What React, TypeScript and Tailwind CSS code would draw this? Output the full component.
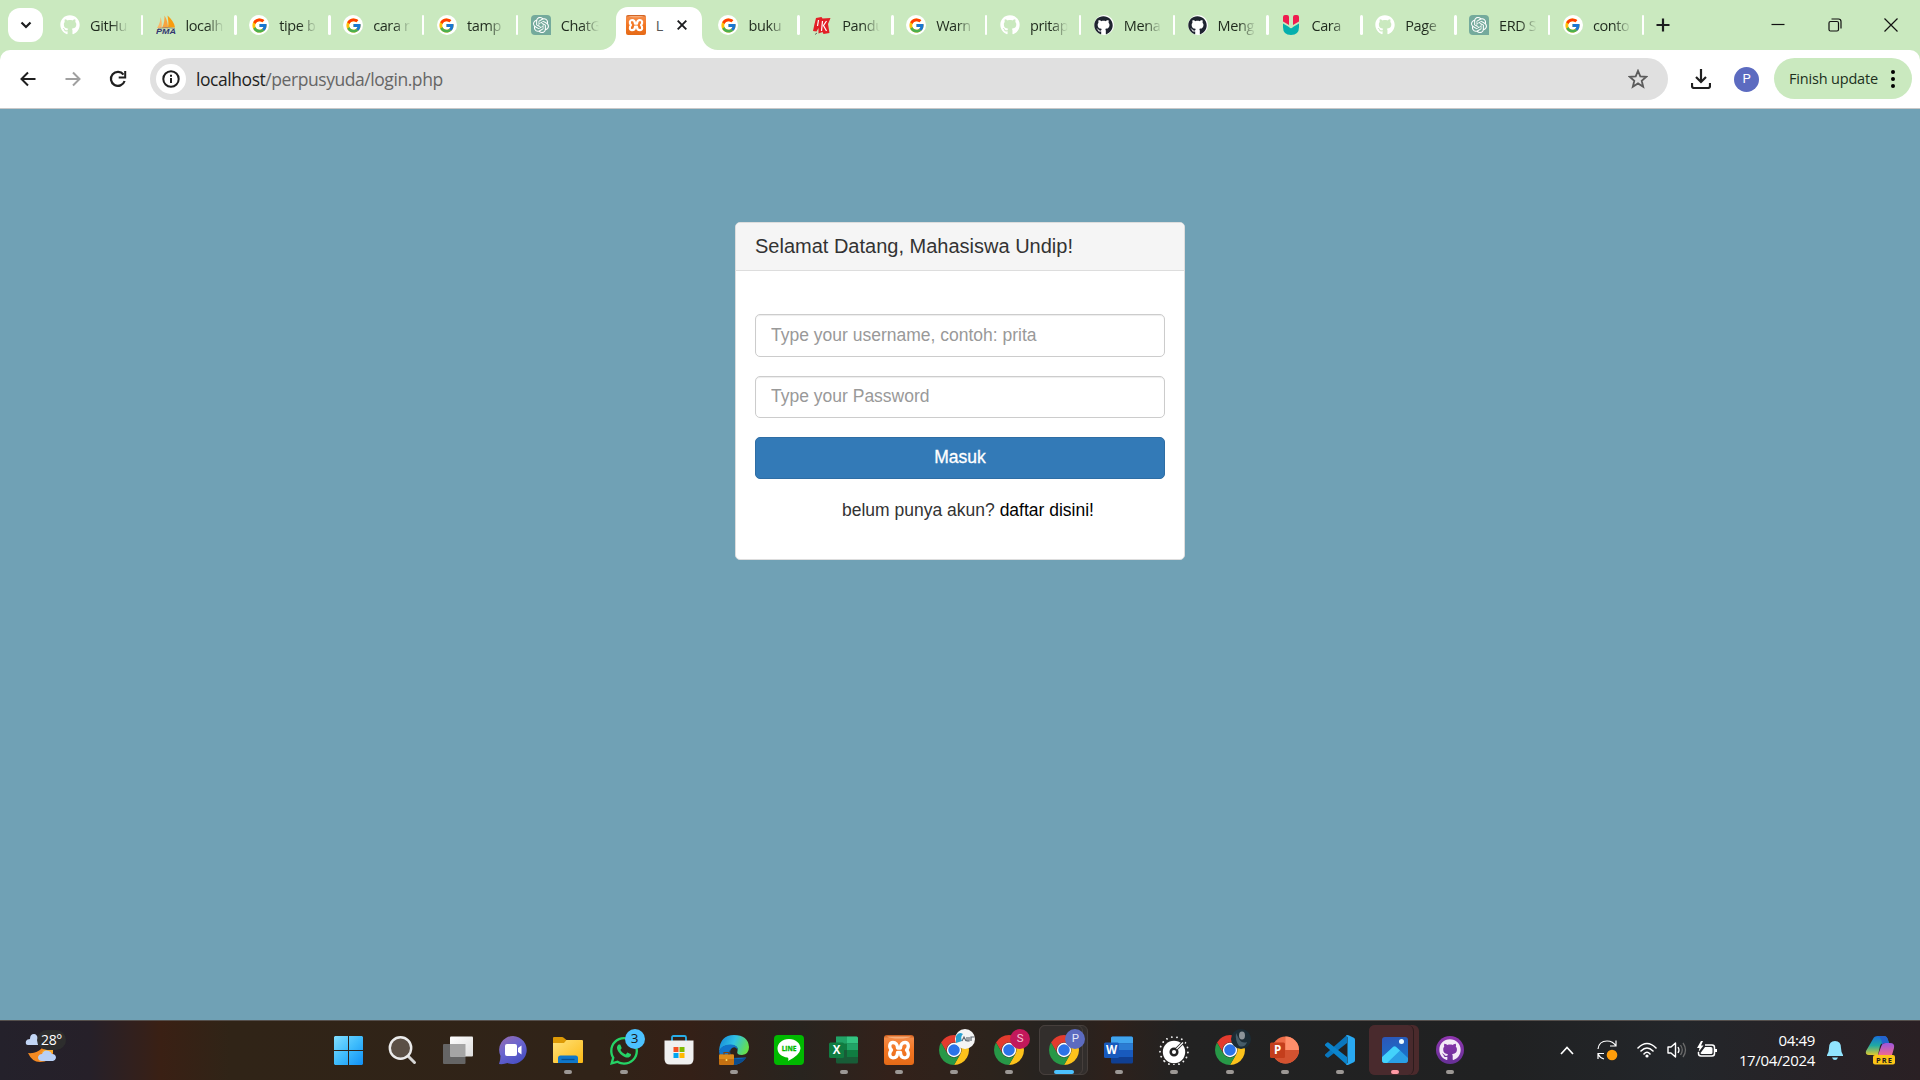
import React from "react";
import { FcGoogle } from "react-icons/fc";
import { FaGithub, FaWhatsapp } from "react-icons/fa";
import { SiOpenai } from "react-icons/si";

const ui = "font-['Open_Sans','Noto_Sans',sans-serif]";

const GoogleFav = () => (
  <span className="flex size-5 items-center justify-center rounded-full bg-white">
    <FcGoogle className="size-[17px]" />
  </span>
);

const OpenAiFav = () => (
  <span className="flex size-5 items-center justify-center rounded-[4px] rounded-br-none bg-[#74aa9c]">
    <SiOpenai className="size-4 text-white" />
  </span>
);

const GithubWhite = () => <FaGithub className="size-5 text-white" />;

const GithubDark = () => (
  <span className="flex size-5 items-center justify-center rounded-full bg-white">
    <FaGithub className="size-[19px] text-[#1f2430]" />
  </span>
);

const PmaFav = () => (
  <svg viewBox="0 0 20 20" className="size-5">
    <path d="M1 13C3.500 9 4.500 6 4.500 2C6 6 6 10 5.500 13Z" fill="#f9b868" />
    <path d="M6 13C8.500 8 8.500 4 8.500 .5C11 4 12 9 12 13.500Z" fill="#f6a340" />
    <path d="M12 12.500C13 8 12 4 11.500 .5C15.500 4 18.500 8 19 12.500Z" fill="#f89c0e" />
    <path d="M2 13.500Q10 11.500 19 13.500" stroke="#777" strokeWidth=".7" fill="none" />
    <text x="0" y="19" fontFamily="Liberation Sans" fontSize="7" fontWeight="bold" fontStyle="italic" fill="#33366f" textLength="20" lengthAdjust="spacingAndGlyphs">PMA</text>
  </svg>
);

const XamppMark = ({ className }: { className: string }) => (
  <svg viewBox="0 0 30 30" className={className}>
    <defs>
      <linearGradient id="xampp" x1="0" y1="0" x2="0" y2="1">
        <stop offset="0" stopColor="#c85c1e" />
        <stop offset=".12" stopColor="#f58a45" />
        <stop offset=".5" stopColor="#f37623" />
        <stop offset="1" stopColor="#e56a17" />
      </linearGradient>
    </defs>
    <rect width="30" height="30" rx="3" fill="url(#xampp)" />
    <path d="M3 1.500H27Q24 3.500 15 3.500Q6 3.500 3 1.500Z" fill="#ffc9a0" opacity=".65" />
    <path
      d="M13.500 13H16.500C16.500 9.500 18.500 7.500 21 7.500C24.500 7.500 25.500 12 22.500 15C25.500 18 24.500 22.800 21 22.800C18.500 22.800 16.500 21 16.500 17.500H13.500C13.500 21 11.500 22.800 9 22.800C5.500 22.800 4.500 18 7.500 15C4.500 12 5.500 7.500 9 7.500C11.500 7.500 13.500 9.500 13.500 13Z"
      fill="none"
      stroke="#fff"
      strokeWidth="3.300"
      strokeLinejoin="round"
    />
  </svg>
);

const PandFav = () => (
  <svg viewBox="0 0 20 20" className="size-5">
    <path d="M4 3L9.500 2L10.500 3.500L18.500 3L16 9L17.500 18L11.500 19L10.500 17L6.500 18.500L6.500 13L4.500 16.500L1 16L2.500 9Z" fill="#e21f26" />
    <path d="M6.500 5L5.500 11M10.500 6L9.500 16M14.500 6L11.500 10.500L14.500 16" stroke="#fff" strokeWidth="1.200" fill="none" />
    <path d="M3 19.500L5 18" stroke="#444" strokeWidth=".8" />
  </svg>
);

const UFav = () => (
  <svg viewBox="0 0 20 20" className="size-5">
    <path d="M2 2Q2 0 4 0H6Q8 0 8 2V10L2 6.500ZM12 2Q12 0 14 0H16Q18 0 18 2V6.500L12 10Z" fill="#f01c4f" />
    <path d="M2 8.500L8 12Q10 14.500 12 12L18 8.500V12Q18 20 10 20Q2 20 2 12Z" fill="#04afad" />
  </svg>
);

const tabs: { title: string; icon: React.ReactNode; active?: boolean; sep?: boolean }[] = [
  { title: "GitHub", icon: <GithubWhite />, sep: true },
  { title: "localh", icon: <PmaFav />, sep: true },
  { title: "tipe b", icon: <GoogleFav />, sep: true },
  { title: "cara r", icon: <GoogleFav />, sep: true },
  { title: "tamp", icon: <GoogleFav />, sep: true },
  { title: "ChatG", icon: <OpenAiFav /> },
  { title: "L", icon: <XamppMark className="size-5" />, active: true },
  { title: "buku", icon: <GoogleFav />, sep: true },
  { title: "Pandu", icon: <PandFav />, sep: true },
  { title: "Warn", icon: <GoogleFav />, sep: true },
  { title: "pritap", icon: <GithubWhite />, sep: true },
  { title: "Mena", icon: <GithubDark />, sep: true },
  { title: "Meng", icon: <GithubDark />, sep: true },
  { title: "Cara", icon: <UFav />, sep: true },
  { title: "Page", icon: <GithubWhite />, sep: true },
  { title: "ERD S", icon: <OpenAiFav />, sep: true },
  { title: "conto", icon: <GoogleFav />, sep: true },
];

function TabStrip() {
  return (
    <div className="flex h-[50px] items-center">
      <div className="ml-2 flex h-[34px] w-[35px] shrink-0 items-center justify-center rounded-[12px] bg-white">
        <svg viewBox="0 0 12 8" className="h-2 w-3"><path d="M1.500 1.500L6 6L10.500 1.500" fill="none" stroke="#1c1d1f" strokeWidth="2.200" /></svg>
      </div>
      <div className="ml-[4.500px] flex h-full">
        {tabs.map((t, i) =>
          t.active ? (
            <div key={i} className="relative flex w-[93.830px] shrink-0 items-end justify-center">
              <svg viewBox="0 0 118 43" className="absolute bottom-0 -left-3 h-[43px] w-[118px]">
                <path d="M0 43C9 43 16 36 16 28V12C16 5 21 0 28 0H90C97 0 102 5 102 12V28C102 36 109 43 118 43Z" fill="#fff" />
              </svg>
              <div className="relative flex h-[50px] w-full items-center pl-[13.500px]">
                {t.icon}
                <span className="mt-px ml-[10px] w-[8px] text-[14.500px] leading-5 text-[#555]">{t.title}</span>
                <svg viewBox="0 0 10 10" className="ml-[13px] size-[10px]"><path d="M.7 .7L9.300 9.300M9.300 .7L.7 9.300" stroke="#1c1d1f" strokeWidth="1.900" /></svg>
              </div>
            </div>
          ) : (
            <div key={i} className="flex w-[93.830px] shrink-0 items-center pl-[12.500px] first:w-[95.500px]">
              <span className="shrink-0">{t.icon}</span>
              <span className="mt-px ml-[10px] w-[38px] overflow-hidden text-[14.500px] leading-6 tracking-[-0.400px] whitespace-nowrap text-[#1f2a1d] [mask-image:linear-gradient(to_right,black_55%,transparent_100%)]">{t.title}</span>
              {t.sep && <span className="ml-auto h-5 w-[2.500px] rounded-full bg-white" />}
            </div>
          )
        )}
      </div>
      <svg viewBox="0 0 14 14" className="ml-[12px] size-[14px]"><path d="M7 .5V13.500M.5 7H13.500" stroke="#1c1d1f" strokeWidth="2.200" /></svg>
      <div className="mr-[22px] ml-auto flex items-center gap-[42.500px]">
        <svg viewBox="0 0 14 14" className="size-[14px]"><path d="M.5 6.500H13.500" stroke="#111" strokeWidth="1.200" /></svg>
        <svg viewBox="0 0 14 14" className="size-[14px]"><rect x="1" y="3.500" width="9.500" height="9.500" rx="1.500" fill="none" stroke="#111" strokeWidth="1.200" /><path d="M3.500 1H10.500Q13 1 13 3.500V10.500" fill="none" stroke="#111" strokeWidth="1.200" /></svg>
        <svg viewBox="0 0 14 14" className="size-[14px]"><path d="M.5 .5L13.500 13.500M13.500 .5L.5 13.500" stroke="#111" strokeWidth="1.200" /></svg>
      </div>
    </div>
  );
}

function Toolbar() {
  return (
    <div className="flex h-[59px] items-center rounded-t-[10px] border-b border-[#c8c8c8] bg-white pr-2">
      <svg viewBox="0 0 16 16" className="ml-5 size-4"><path d="M15.500 8H2M8 1.500L1.500 8L8 14.500" fill="none" stroke="#1f1f1f" strokeWidth="2" /></svg>
      <svg viewBox="0 0 16 16" className="ml-[28.500px] size-4"><path d="M.5 8H14M8 1.500L14.500 8L8 14.500" fill="none" stroke="#a0a0a0" strokeWidth="2" /></svg>
      <svg viewBox="0 0 18 18" className="ml-[28px] size-[18px]"><path d="M14.500 4.600A7 7 0 1 0 15.600 11" fill="none" stroke="#1f1f1f" strokeWidth="2.200" /><path d="M16.200 1V7.500H9.700" fill="none" stroke="#1f1f1f" strokeWidth="2" /></svg>
      <div className="ml-[23.500px] flex h-[42px] w-[1518px] items-center rounded-full bg-[#e0e0e0] pr-5 pl-[6px]">
        <span className="flex size-[30px] items-center justify-center rounded-full bg-white">
          <svg viewBox="0 0 18 18" className="size-[18px]"><circle cx="9" cy="9" r="7.700" fill="none" stroke="#1f1f1f" strokeWidth="2" /><path d="M9 8V13M9 4.800V6.800" stroke="#1f1f1f" strokeWidth="2" /></svg>
        </span>
        <span className="mt-px ml-[10px] text-[17.500px] tracking-[-0.440px] text-[#666]"><span className="text-[#1f1f1f]">localhost</span>/perpusyuda/login.php</span>
        <svg viewBox="0 0 20 20" className="ml-auto size-5"><path d="M10 1.800L12.300 7.400L18.300 7.800L13.700 11.700L15.200 17.700L10 14.400L4.800 17.700L6.300 11.700L1.700 7.800L7.700 7.400Z" fill="none" stroke="#5c5c5c" strokeWidth="1.800" /></svg>
      </div>
      <svg viewBox="0 0 20 20" className="ml-[23px] size-5"><path d="M10 0V12M5 8L10 13L15 8M1 14V17Q1 19 3 19H17Q19 19 19 17V14" fill="none" stroke="#1f1f1f" strokeWidth="2.200" /></svg>
      <span className="ml-[23px] flex size-[25px] items-center justify-center rounded-full bg-[#5c6bc0] font-[Roboto,sans-serif] text-[13px] text-white">P</span>
      <div className="mb-px ml-auto flex h-[41px] w-[138px] items-center rounded-full bg-[#cae9bf] pl-[15px]">
        <span className="text-[14.500px] tracking-[-0.180px] whitespace-nowrap text-[#20301c]">Finish update</span>
        <svg viewBox="0 0 4 18" className="mr-[17.500px] ml-auto h-[18px] w-1"><circle cx="2" cy="2" r="2" /><circle cx="2" cy="9" r="2" /><circle cx="2" cy="16" r="2" /></svg>
      </div>
    </div>
  );
}

function LoginCard() {
  return (
    <div className="mt-[113px] h-[338px] w-[450px] rounded-[5px] border border-[#ddd] bg-white font-['Liberation_Sans',Arial,sans-serif] text-[17.500px] text-[#333]">
      <div className="flex h-[48px] items-center rounded-t-[4px] border-b border-[#ddd] bg-[#f5f5f5] px-[19px] pb-[2px] text-[20px]">Selamat Datang, Mahasiswa Undip!</div>
      <div className="flex flex-col px-[19px] pt-[43px]">
        <input type="text" placeholder="Type your username, contoh: prita" className="h-[43px] rounded-[5px] border border-[#ccc] px-[15px] shadow-[inset_0_1px_1px_rgba(0,0,0,0.075)] placeholder:text-[#999]" />
        <input type="password" placeholder="Type your Password" className="mt-[19px] h-[42px] rounded-[5px] border border-[#ccc] px-[15px] pb-[2px] shadow-[inset_0_1px_1px_rgba(0,0,0,0.075)] placeholder:text-[#999]" />
        <button className="mt-[19px] h-[42px] rounded-[5px] border border-[#2e6da4] bg-[#337ab7] pb-[2px] text-white [-webkit-text-stroke:0.300px_white]">Masuk</button>
        <p className="mt-[19px] pl-[16px] text-center leading-[25px]">belum punya akun? <a className="text-black">daftar disini!</a></p>
      </div>
    </div>
  );
}

const Chrome = ({ badge }: { badge: React.ReactNode }) => (
  <span className="relative block size-[30px]">
    <svg viewBox="4 4 40 40" className="size-[30px]">
      <path d="M6.680 14A20 20 0 0 1 41.320 14L24 14A10 10 0 0 0 15.340 29Z" fill="#e33b2e" />
      <path d="M41.320 14A20 20 0 0 1 24 44L32.660 29A10 10 0 0 0 24 14Z" fill="#fcc21b" />
      <path d="M24 44A20 20 0 0 1 6.680 14L15.340 29A10 10 0 0 0 32.660 29Z" fill="#279847" />
      <circle cx="24" cy="24" r="9.600" fill="#fff" />
      <circle cx="24" cy="24" r="7.700" fill="#2c73e8" />
    </svg>
    <span className="absolute -top-[6px] left-[16px]">{badge}</span>
  </span>
);

const Office = ({ letter, kind }: { letter: string; kind: "x" | "w" | "p" }) => (
  <svg viewBox="0 0 30 30" className="size-[30px]">
    {kind === "x" && (<><rect x="7" y="1.500" width="22" height="27" rx="1.500" fill="#185c37" /><path d="M7 1.500H18V10H7Z" fill="#21a366" /><path d="M18 1.500H27.500Q29 1.500 29 3V8.500H18Z" fill="#33c481" /><path d="M18 8.500H29V15H18Z" fill="#21a366" /><path d="M7 8.500H18V15H7Z" fill="#107c41" /><path d="M18 15H29V22H18Z" fill="#107c41" /></>)}
    {kind === "w" && (<><rect x="7" y="1.500" width="22" height="27" rx="1.500" fill="#103f91" /><path d="M7 8V3Q7 1.500 8.500 1.500H27.500Q29 1.500 29 3V8.500H7Z" fill="#41a5ee" /><path d="M7 8.500H29V15H7Z" fill="#2b7cd3" /><path d="M7 15H29V22H7Z" fill="#185abd" /></>)}
    {kind === "p" && (<><circle cx="15.500" cy="15" r="13.500" fill="#ed6c47" /><path d="M15.500 1.500A13.500 13.500 0 0 1 29 15H15.500Z" fill="#ff8f6b" /><path d="M2 15H29A13.500 13.500 0 0 1 2 15Z" fill="#d35230" /></>)}
    <rect x="0" y="7.500" width="15" height="15.500" rx="1.500" fill={kind === "x" ? "#107c41" : kind === "w" ? "#185abd" : "#c43e1c"} />
    <text x="7.500" y="19.300" textAnchor="middle" fontFamily="Open Sans" fontWeight="bold" fontSize="11.500" fill="#fff">{letter}</text>
  </svg>
);

const Windows = () => (
  <svg viewBox="0 0 29 29" className="size-[29px]">
    <defs><linearGradient id="win" x1="0" y1="0" x2="29" y2="29" gradientUnits="userSpaceOnUse"><stop offset="0" stopColor="#82dfff" /><stop offset=".5" stopColor="#3fbcfc" /><stop offset="1" stopColor="#1090f5" /></linearGradient></defs>
    <path d="M1 0H14V14H0V1ZM15 0H28L29 1V14H15ZM0 15H14V29H1L0 28ZM15 15H29V28L28 29H15Z" fill="url(#win)" />
  </svg>
);

const Search = () => (
  <svg viewBox="0 0 30 30" className="size-[30px]"><path d="M19 20L26.500 27.500" stroke="#d5d5d5" strokeWidth="3" strokeLinecap="round" /><circle cx="12.500" cy="13" r="10.700" fill="#5b5046" stroke="#ebebeb" strokeWidth="2.400" /></svg>
);

const TaskView = () => (
  <svg viewBox="0 0 30 30" className="size-[30px]"><defs><linearGradient id="tv" x1="0" y1="0" x2="1" y2="1"><stop stopColor="#fff" /><stop offset="1" stopColor="#ddd" /></linearGradient></defs><rect x="0" y="9" width="22.500" height="20" rx="1" fill="#656565" /><rect x="7" y="1.500" width="23" height="20" rx="1" fill="url(#tv)" /><path d="M7 9H22.500V21.500H7Z" fill="#a5a5a5" /></svg>
);

const Teams = () => (
  <svg viewBox="0 0 30 30" className="size-[30px]"><defs><linearGradient id="tm" x1="0" y1="0" x2=".6" y2="1"><stop stopColor="#9a6cad" /><stop offset=".5" stopColor="#6b65cf" /><stop offset="1" stopColor="#4a50c4" /></linearGradient></defs><path d="M15 1A14 14 0 1 1 9.500 28Q6 29.500 1 29Q2.500 25 2.500 21A14 14 0 0 1 15 1Z" fill="url(#tm)" /><rect x="7" y="9" width="12" height="12" rx="2" fill="#fff" /><path d="M20 13L23.500 10.500V19.500L20 17Z" fill="#fff" /></svg>
);

const Explorer = () => (
  <svg viewBox="0 0 30 30" className="size-[30px]"><defs><linearGradient id="fo" x1="0" y1="0" x2="1" y2="1"><stop stopColor="#ffe27a" /><stop offset="1" stopColor="#fcb914" /></linearGradient></defs><path d="M0 8V3Q0 2 1 2H9Q10 2 11 3L13.500 5H25V10H0Z" fill="#dd9a06" /><path d="M0 8H11L13.500 5H29Q30 5 30 6V27Q30 28 29 28H1Q0 28 0 27Z" fill="url(#fo)" /><path d="M5 28V23Q5 20.500 7.500 20.500H22.500Q25 20.500 25 23V28Z" fill="#0f77ca" /><path d="M8.500 24.500H21.500" stroke="#064f91" strokeWidth="1.300" /></svg>
);

const Whatsapp = () => (
  <span className="relative block size-[30px]">
    <FaWhatsapp className="size-[32px] -translate-x-px text-[#25d366]" />
    <span className="absolute -top-[6px] left-[16px] flex size-5 items-center justify-center rounded-full bg-[#4cc2ff] text-[13.500px] leading-none text-[#1a1a1a]">3</span>
  </span>
);

const Store = () => (
  <svg viewBox="0 0 30 30" className="size-[30px]"><path d="M8 7V2.500Q8 1 9.500 1H20.500Q22 1 22 2.500V7" fill="none" stroke="#28aee8" strokeWidth="1.800" /><path d="M.5 5.500H29.500V24Q29.500 29.500 24 29.500H6Q.5 29.500 .5 24Z" fill="#f0f0f0" /><path d="M9.500 12H14.500V17H9.500Z" fill="#f25022" /><path d="M15.500 12H20.500V17H15.500Z" fill="#7fba00" /><path d="M9.500 18H14.500V23H9.500Z" fill="#00a4ef" /><path d="M15.500 18H20.500V23H15.500Z" fill="#ffb900" /></svg>
);

const Edge = () => (
  <svg viewBox="0 0 30 30" className="size-[30px]">
    <defs><linearGradient id="ed" x1="0" y1=".2" x2="1" y2=".5"><stop stopColor="#1689d8" /><stop offset=".5" stopColor="#31c2e5" /><stop offset="1" stopColor="#66e04a" /></linearGradient></defs>
    <path d="M0 16Q1 0 15 0Q29 0 30 12Q30 19 23 20Q17 20 18.500 16Q20 11 13 10Q4 9 0 16Z" fill="url(#ed)" />
    <path d="M0 16Q3 9 12 9.500Q19 10 18.500 15Q17 11 13 13Q9 16 13 23L27 22.500Q22 30 14 30Q1 29 0 16Z" fill="#1173ca" />
    <path d="M11 15Q10 27 27.500 22.500Q22 30 14 30Q5 23 11 15Z" fill="#0b4d8f" />
    <rect x="0" y="19.500" width="15" height="10.500" rx="1" fill="#c47012" /><path d="M0 20.500Q0 19.500 1 19.500H14Q15 19.500 15 20.500V24H0Z" fill="#dd8b1b" /><path d="M5 19.500V17.500H10V19.500" fill="none" stroke="#7a4414" strokeWidth="1.200" /><circle cx="7.500" cy="25" r="1" fill="#ffe169" />
  </svg>
);

const LineApp = () => (
  <svg viewBox="0 0 30 30" className="size-[30px]"><rect width="30" height="30" rx="4" fill="#00b900" /><path d="M15 4C8 4 3.500 8.500 3.500 13.500C3.500 18.500 8 22 13.500 22.500Q15 23 14 26Q26 20 26.500 13.500C26.500 8.500 22 4 15 4Z" fill="#fff" /><text x="15" y="16" textAnchor="middle" fontFamily="Open Sans" fontWeight="bold" fontSize="6.500" fill="#00b900" stroke="#00b900" strokeWidth=".3">LINE</text></svg>
);

const Gauge = () => (
  <svg viewBox="0 0 30 30" className="size-[30px]"><circle cx="15" cy="16" r="14" fill="none" stroke="#eee" strokeWidth="1.800" strokeDasharray=".1 5" strokeLinecap="round" transform="rotate(-225 15 16)" /><circle cx="15" cy="17" r="11.200" fill="#fff" /><circle cx="15" cy="17" r="3.300" fill="#fff" stroke="#222" strokeWidth="2.500" /><path d="M17 14.500L25 6.500" stroke="#222" strokeWidth="3" /><path d="M17.500 14L24 7.500" stroke="#fff" strokeWidth="1.300" /></svg>
);

const VsCode = () => (
  <svg viewBox="0 0 30 30" className="size-[30px]"><path d="M0 19.500L22 0L22 8L3.500 22.500Q2.500 23 1.500 22L.3 21Q-.3 20.300 0 19.500Z" fill="#0a76bd" /><path d="M0 10.500Q-.3 9.700 .3 9L1.500 8Q2.500 7 3.500 7.500L22 22V30Z" fill="#0b84cc" /><path d="M21 .5Q22 -.3 23.500 .3L28.800 2.800Q30 3.400 30 4.800V25.200Q30 26.600 28.800 27.200L23.500 29.700Q22 30.300 21 29.500L22.500 28V2Z" fill="#29a9f2" /></svg>
);

const Photos = () => (
  <svg viewBox="0 0 30 30" className="size-[30px]"><defs><linearGradient id="ph" x1="0" y1="0" x2=".3" y2="1"><stop stopColor="#2d55b7" /><stop offset="1" stopColor="#1774cc" /></linearGradient><clipPath id="phc"><rect x="2" y="2" width="26" height="26" rx="3" /></clipPath></defs><rect x="2" y="2" width="26" height="26" rx="3" fill="url(#ph)" /><g clipPath="url(#phc)"><path d="M2 25L12.500 12.500Q14.500 10 17 12.500L30 25V29H2Z" fill="#2a9fe5" /><path d="M2 22L12.500 12.500Q14.500 10.500 16.500 12.500L20 15.500L6 29H2Z" fill="#43d2fb" /></g><circle cx="21.500" cy="6.500" r="2.500" fill="#eefbff" /></svg>
);

const GithubDesktop = () => (
  <span className="flex size-[28px] items-center justify-center rounded-full bg-gradient-to-b from-[#9035b0] to-[#663096]"><FaGithub className="size-[22px] text-[#f3eaf7]" /></span>
);

const badgeText = "flex size-5 items-center justify-center rounded-full font-[Roboto,sans-serif] text-[11.500px]";

const apps: { icon: React.ReactNode; state?: "running" | "focused" | "alert" }[] = [
  { icon: <Windows /> },
  { icon: <Search /> },
  { icon: <TaskView /> },
  { icon: <Teams /> },
  { icon: <Explorer />, state: "running" },
  { icon: <Whatsapp />, state: "running" },
  { icon: <Store /> },
  { icon: <Edge />, state: "running" },
  { icon: <LineApp /> },
  { icon: <Office letter="X" kind="x" />, state: "running" },
  { icon: <XamppMark className="size-[30px]" />, state: "running" },
  { icon: <Chrome badge={<svg viewBox="0 0 20 20" className="size-5"><circle cx="10" cy="10" r="10" fill="#f4f4f4" /><path d="M1 7Q4 2 8 5Q5 8 7 12L1 14Z" fill="#29a0cf" /><path d="M7 12L9 8L11 12M12 8V12H14V8M16 12V8H19" stroke="#606972" strokeWidth="1.200" fill="none" /></svg>} />, state: "running" },
  { icon: <Chrome badge={<span className={badgeText + " bg-[#c2185b] text-[#f5c6d8]"}>S</span>} />, state: "running" },
  { icon: <Chrome badge={<span className={badgeText + " bg-[#5c6bc0] text-[#e4e7f7]"}>P</span>} />, state: "focused" },
  { icon: <Office letter="W" kind="w" />, state: "running" },
  { icon: <Gauge />, state: "running" },
  { icon: <Chrome badge={<svg viewBox="0 0 20 20" className="size-5"><circle cx="10" cy="10" r="10" fill="#1c2c35" /><ellipse cx="11" cy="6.500" rx="3" ry="4" fill="#8c9499" /><path d="M5 4Q4 12 8 17Q14 19 16 13Q11 15 8 10Z" fill="#465c68" /></svg>} />, state: "running" },
  { icon: <Office letter="P" kind="p" />, state: "running" },
  { icon: <VsCode />, state: "running" },
  { icon: <Photos />, state: "alert" },
  { icon: <GithubDesktop />, state: "running" },
];

function Taskbar() {
  return (
    <div className="flex h-[60px] items-center border-t border-[#55504d] bg-[linear-gradient(90deg,#24212b_0px,#262029_90px,#35201a_145px,#3a2014_160px,#302417_230px,#302318_600px,#342017_690px,#28241f_800px,#33211a_890px,#2c231c_990px,#252321_1060px,#2e211b_1110px,#222222_1180px,#202122_1500px,#23262a_1680px,#2a2024_1920px)] pb-px text-white">
      <div className="flex w-[320.500px] shrink-0 self-stretch pt-[8px] pl-[25px]">
        <span className="relative block h-[40px] w-[45px]">
          <svg viewBox="0 0 40 36" className="absolute top-[2px] left-0 h-9 w-10"><path d="M3 14Q0 14 1 10Q2 8 5 8Q5 3 9 3Q12 3 13 8V14Z" fill="#c2d5f5" /><path d="M3 22Q12 23 17 17L28 17V24Q25 31 15 31Q7 31 3 22Z" fill="#f58a22" /><path d="M20 17H28V22H16Z" fill="#f9ab2d" /><path d="M17 30Q13 30 13 26Q14 23 17 23Q19 18 24 20Q26 21 27 23Q31 23 31 27Q30 30 28 30Z" fill="#b9d0f6" /></svg>
          <span className="absolute top-px left-[12px] flex h-5 w-[29px] items-center justify-center rounded-full bg-[#2d2d2d] text-[14px] leading-none tracking-[-0.300px]">28°</span>
        </span>
      </div>
      <div className="flex h-full">
        {apps.map((a, i) => (
          <div key={i} className="relative flex h-full w-[55.100px] items-center justify-center">
            {a.state === "focused" && <><span className="absolute top-1 left-[2.500px] h-[50px] w-[49px] rounded-[6px] border border-[#463f3c] bg-[#322e2c]" /><span className="absolute top-1 left-[2.500px] h-[50px] w-[44px] rounded-[6px] border border-[#463f3c] bg-[#322e2c]" /></>}
            {a.state === "alert" && <><span className="absolute top-1 left-[2px] h-[50px] w-[50px] rounded-[6px] bg-[#4b2a2c]" /><span className="absolute top-1 left-[2px] h-[50px] w-[45px] rounded-[6px] border-r border-[#2c1c1d] bg-[#492a2d]" /></>}
            <span className="relative">{a.icon}</span>
            {a.state === "running" && <span className="absolute bottom-[5px] h-1 w-2 rounded-full bg-[#9c9895]" />}
            {a.state === "focused" && <span className="absolute bottom-[5px] h-1 w-5 rounded-full bg-[#4cc2ff]" />}
            {a.state === "alert" && <span className="absolute bottom-[5px] h-1 w-2 rounded-full bg-[#ff99a4]" />}
          </div>
        ))}
      </div>
      <div className="mr-[25px] ml-auto flex items-center">
        <svg viewBox="0 0 14 9" className="h-[9px] w-[14px]"><path d="M1 8L7 1.500L13 8" fill="none" stroke="#fff" strokeWidth="1.700" /></svg>
        <svg viewBox="0 0 22 22" className="ml-[22px] size-[22px]"><path d="M2 10Q3 2 11 2Q17 2 20 7M20 1.500V7H14M8 20Q4 19 2 15M2 20V14.500H8" fill="none" stroke="#fff" strokeWidth="1.200" /><circle cx="16" cy="16" r="5.300" fill="#ff9d0a" /></svg>
        <svg viewBox="0 0 20 16" className="ml-[19px] h-4 w-5"><path d="M1 6Q10 -3 19 6M4 9Q10 3 16 9M7 12Q10 8.500 13 12" fill="none" stroke="#fff" strokeWidth="1.600" strokeLinecap="round" /><circle cx="10" cy="14" r="1.600" fill="#fff" /></svg>
        <svg viewBox="0 0 20 18" className="ml-[10px] h-[18px] w-5"><path d="M1 6H4L8.500 2V16L4 12H1Z" fill="none" stroke="#fff" strokeWidth="1.400" strokeLinejoin="round" /><path d="M11 6Q13 9 11 12" fill="none" stroke="#fff" strokeWidth="1.300" /><path d="M13.500 4Q17 9 13.500 14M16 2Q21 9 16 16" fill="none" stroke="#6b6b6b" strokeWidth="1.300" /></svg>
        <svg viewBox="0 0 20 18" className="ml-[10px] h-[18px] w-5"><path d="M8 4H15Q17.500 4 17.500 6.500V12.500Q17.500 15 15 15H4Q1.500 15 1.500 12.500V11" fill="none" stroke="#fff" strokeWidth="1.500" /><path d="M8 6H14Q15.500 6 15.500 7.500V11.500Q15.500 13 14 13H5Q3.500 13 3.500 12ZM18 8H20V11H18Z" fill="#fff" /><path d="M4 0L0 7H2.500L1.500 11L6.500 4.500H4L6 0Z" fill="#fff" /></svg>
        <div className="mb-px ml-[12px] flex w-[86px] flex-col items-end text-[15px] leading-5 tracking-[-0.350px] whitespace-nowrap"><span>04:49</span><span>17/04/2024</span></div>
        <svg viewBox="0 0 18 20" className="ml-[11px] h-5 w-[18px]"><path d="M1 15Q3 12 3 8Q3 1 9 1Q15 1 15 8Q15 12 17 15V16H1ZM6 17.500H12Q11 20 9 20Q7 20 6 17.500Z" fill="#91e5ff" /></svg>
        <svg viewBox="0 0 30 30" className="ml-[21px] size-[30px]">
          <defs><linearGradient id="cp1" x1="0" y1="0" x2="0" y2="1"><stop stopColor="#176fdb" /><stop offset=".5" stopColor="#20a9a2" /><stop offset="1" stopColor="#e0c92d" /></linearGradient><linearGradient id="cp2" x1="0" y1="0" x2="0" y2="1"><stop stopColor="#9a56df" /><stop offset="1" stopColor="#ef688f" /></linearGradient></defs>
          <path d="M8 4Q9 1 13 1H19Q22 1 23 5L24 8H19Q16 8 15 11L13 20H4Q0 20 1 16Z" fill="url(#cp1)" /><path d="M13 1H19Q22 1 23 5L24 8H19L17 10Q17 3 13 1Z" fill="#2463ce" /><path d="M16 12Q17 8 21 8H25Q30 8 29 13L27 20H13Z" fill="url(#cp2)" />
          <rect x="8" y="20" width="22" height="9.500" rx="2" fill="#fcc516" /><text x="19" y="27.500" textAnchor="middle" fontFamily="Open Sans" fontWeight="bold" fontSize="7.500" fill="#1d1d1d" textLength="16">PRE</text>
        </svg>
      </div>
    </div>
  );
}

export default function App() {
  return (
    <div className={`flex h-[1080px] w-[1920px] flex-col overflow-hidden bg-[#cae9bf] ${ui}`}>
      <TabStrip />
      <Toolbar />
      <main className="flex flex-1 items-start justify-center bg-[#70a1b5]"><LoginCard /></main>
      <Taskbar />
    </div>
  );
}
